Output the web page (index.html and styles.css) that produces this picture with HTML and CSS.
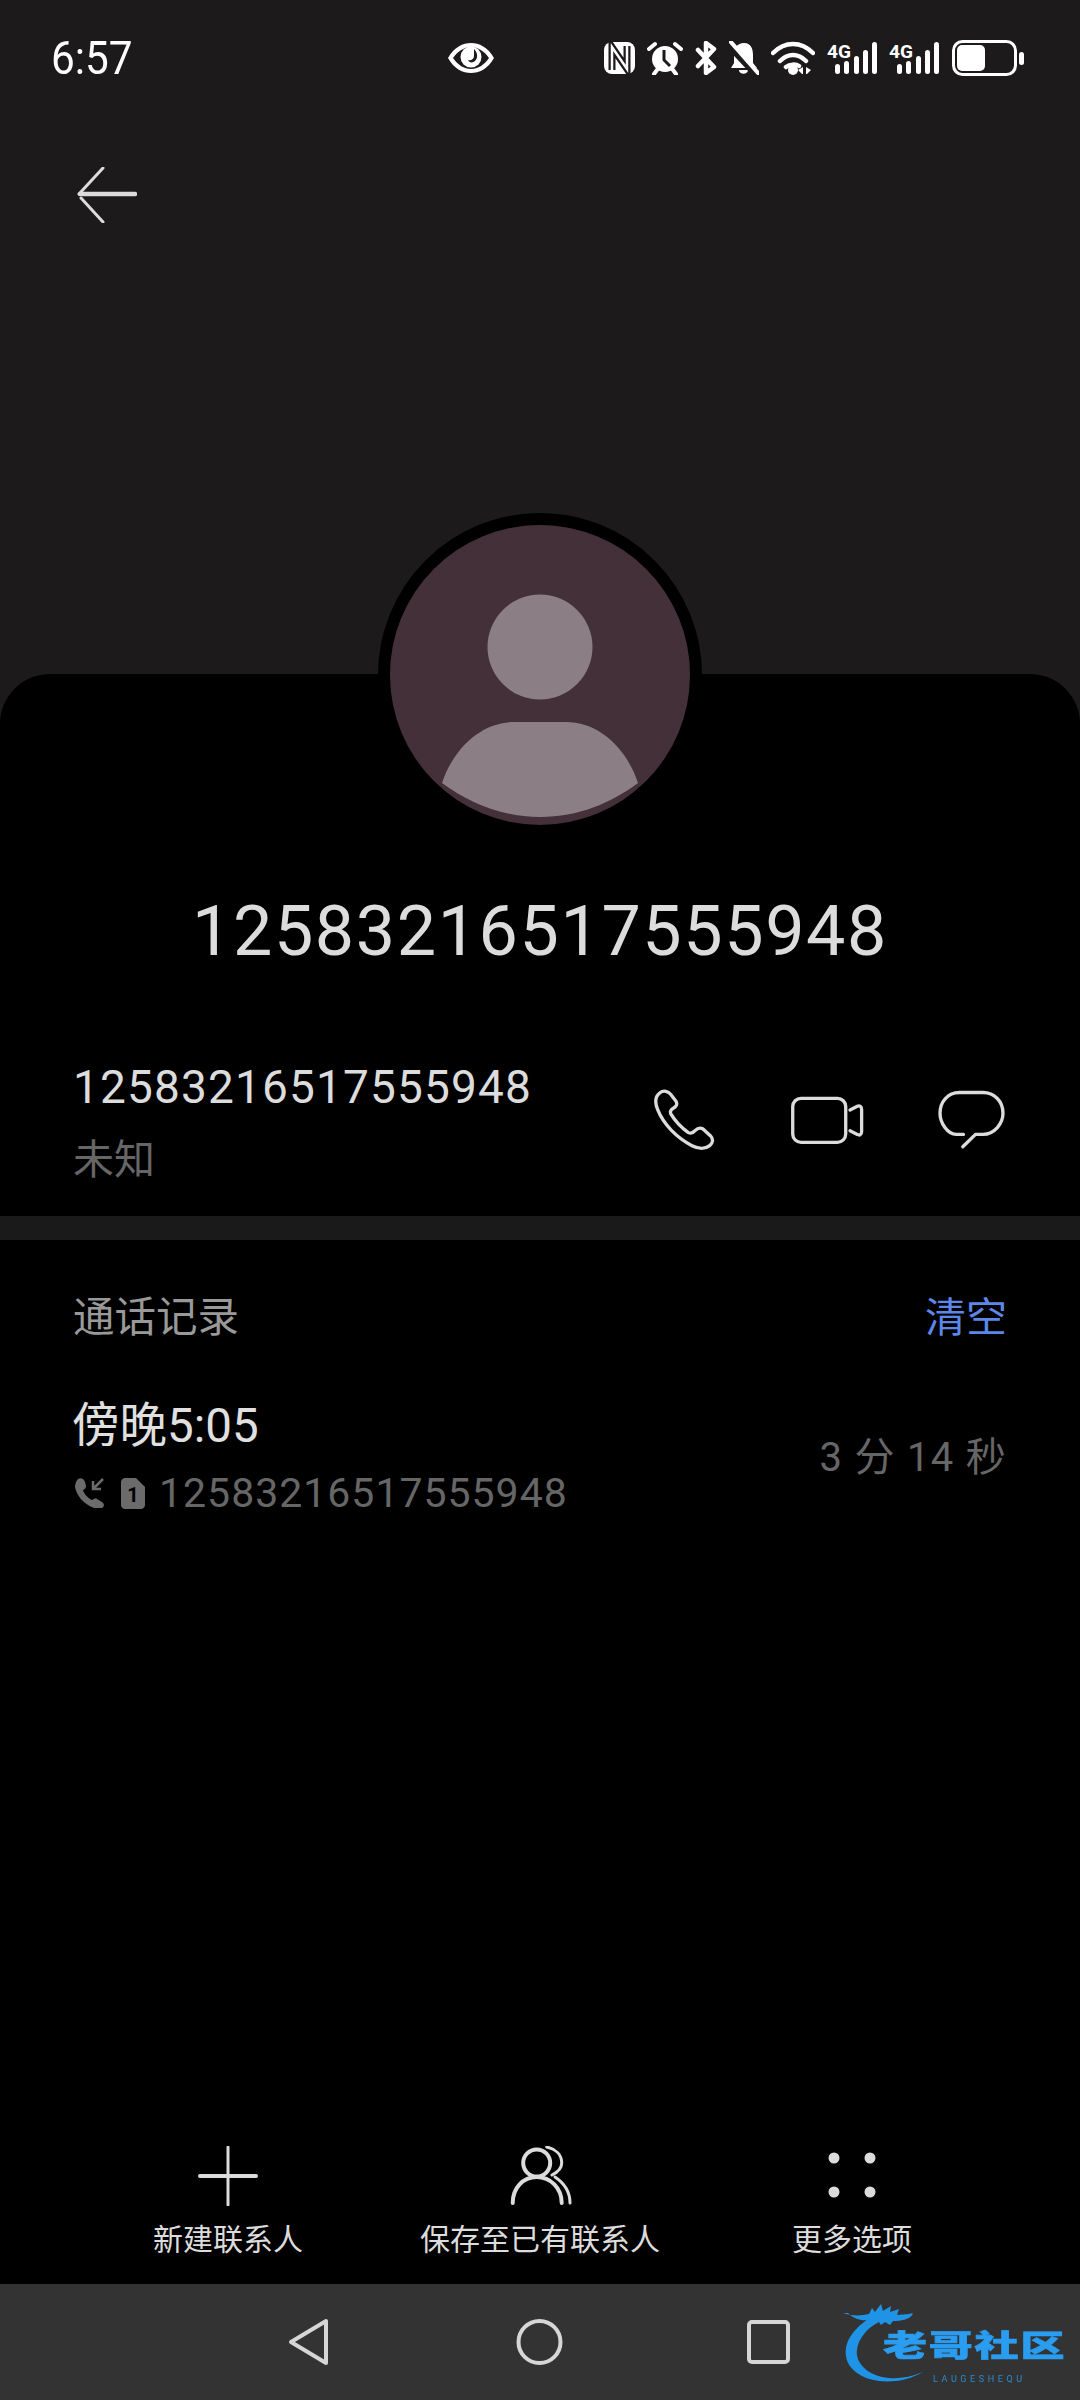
FILE: index.html
```html
<!DOCTYPE html>
<html lang="zh">
<head>
<meta charset="utf-8">
<title>通话详情</title>
<link rel="stylesheet" href="styles.css">
</head>
<body>
<div class="page">
  <header class="top">
    <div class="status">
      <span class="time">6:57</span>
      <svg class="eye" width="46" height="32" viewBox="0 0 46 32"><path class="w" fill-rule="evenodd" d="M0 16C6 5 15 1 23 1s17 4 23 15c-6 11-15 15-23 15S6 27 0 16zM23 5C16 5 10 9 5 16c5 7 11 11 18 11s13-4 18-11C36 9 30 5 23 5z"/><circle class="w" cx="23" cy="15" r="10.5"/><path class="k" d="M26 7c4 4 4 9 1 12-2 2-6 2-7-1 3 1 6-1 6-4 0-3 0-5 0-7z"/></svg>
      <div class="indicators">
        <svg width="31" height="32" viewBox="0 0 31 32"><rect class="w" width="31" height="32" rx="8"/><path class="nk" d="M8 28V5l15 22V4"/><path class="nw" d="M8 28V5l15 22V4"/></svg>
        <svg width="36" height="34" viewBox="0 0 36 34"><circle class="w" cx="18" cy="18" r="13"/><path class="hand" d="M17 9v10l6 6"/><path class="st" d="M2 8l6-5M34 8l-6-5M7 33l3-4M29 33l-3-4"/></svg>
        <svg width="22" height="34" viewBox="0 0 22 34"><path class="bt" d="M3 9l16 17-8 6V2l8 6L3 25"/></svg>
        <svg width="30" height="34" viewBox="0 0 30 34"><path class="w" d="M15 2c7 0 9 6 9 12v8l4 5H2l3-5v-8c0-7 3-12 10-12zM10 29h9c0 5-9 5-9 0z"/><path class="slashk" d="M-2 3l30 32"/><path class="st" d="M1 0l28 32"/></svg>
        <svg width="44" height="34" viewBox="0 0 44 34"><path class="wifi" d="M2 12c12-12 28-12 40 0M9 20c8-8 18-8 26 0M15 26c4-3 10-3 13-1"/><circle class="w" cx="22" cy="29" r="5"/><path class="w" d="M32 26v7h-1l-4-4zM35 26v7h1l4-4z"/></svg>
        <svg class="signal" width="50" height="34" viewBox="0 0 50 34"><text class="g4" x="0" y="17" textLength="24" lengthAdjust="spacingAndGlyphs">4G</text><rect class="w" x="8" y="23" width="5" height="10" rx="2.5"/><rect class="w" x="17" y="20" width="5" height="13" rx="2.5"/><rect class="w" x="27" y="15" width="5" height="18" rx="2.5"/><rect class="w" x="36" y="9" width="5" height="24" rx="2.5"/><rect class="w" x="45" y="1" width="5" height="32" rx="2.5"/></svg>
        <svg class="signal" width="50" height="34" viewBox="0 0 50 34"><text class="g4" x="0" y="17" textLength="24" lengthAdjust="spacingAndGlyphs">4G</text><rect class="w" x="8" y="23" width="5" height="10" rx="2.5"/><rect class="w" x="17" y="20" width="5" height="13" rx="2.5"/><rect class="w" x="27" y="15" width="5" height="18" rx="2.5"/><rect class="w" x="36" y="9" width="5" height="24" rx="2.5"/><rect class="w" x="45" y="1" width="5" height="32" rx="2.5"/></svg>
        <svg class="battery" width="72" height="36" viewBox="0 0 72 36"><rect class="batt" x="1.5" y="1.5" width="62" height="33" rx="9"/><rect class="w" x="5" y="5" width="28" height="26" rx="5"/><rect class="w" x="67" y="12" width="5" height="13" rx="2.5"/></svg>
      </div>
    </div>
    <div class="toolbar">
      <svg class="back" width="60" height="56" viewBox="0 0 60 56"><path class="backline" d="M26 1L2 27M26 55L4 31"/><path class="backbar" d="M3 27h55"/></svg>
    </div>
  </header>

  <main class="card">
    <div class="avatar">
      <svg width="300" height="300" viewBox="0 0 300 300"><circle class="av-bg" cx="150" cy="150" r="150"/><circle class="av-fg" cx="150" cy="122" r="52.5"/><path class="av-fg" d="M52 258c12-36 40-61 72-61h52c32 0 60 25 72 61-27 20-60 34-98 34s-71-14-98-34z"/></svg>
    </div>
    <h1 class="name">12583216517555948</h1>

    <section class="contact">
      <div class="contact-text">
        <div class="contact-num">12583216517555948</div>
        <div class="contact-sub">未知</div>
      </div>
      <div class="contact-actions">
        <svg class="ico" width="65" height="65" viewBox="95 85 195 195"><path d="M118 100c12-10 27-5 34 5l15 20c5 8 1 15-7 20-10 5-12 13-7 20 12 20 32 40 50 53 7 4 15 2 21-5 8-8 16-10 24-5l22 20c10 10 8 22-2 30-13 10-33 10-53 0-45-23-85-63-103-108-9-22-7-40 6-50z"/></svg>
        <svg class="ico" width="77" height="53" viewBox="510 100 230 160"><rect x="520" y="113" width="160" height="133" rx="25"/><path d="M693 148l22-11c7-3 13 0 13 10v66c0 10-6 13-13 9l-22-11"/></svg>
        <svg class="ico" width="72" height="64" viewBox="950 90 215 190"><path d="M1032 228h-22c-25 0-48-33-48-63 0-35 23-62 58-62h70c35 0 60 27 60 62 0 30-25 63-60 63h-22l-38 37"/></svg>
      </div>
    </section>

    <div class="divider"></div>

    <section class="log">
      <div class="log-head">
        <span class="log-title">通话记录</span>
        <span class="log-clear">清空</span>
      </div>
      <div class="log-row">
        <div class="log-main">
          <div class="log-time">傍晚5:05</div>
          <div class="log-sub">
            <svg width="30" height="30" viewBox="0 0 30 30"><path class="g" d="M3 1c3-2 6 0 7 3l1 4c0 2-1 3-3 4 1 4 5 8 9 10 2-1 3-2 5-1l5 3c3 2 2 5 0 6-4 2-9 0-14-3C6 23 1 15 0 9c0-3 1-6 3-8z"/><path class="gs" d="M28 1l-9 9M18 3v8h8"/></svg>
            <svg class="sim" width="24" height="31" viewBox="0 0 24 31"><path class="g" d="M4 0h11l9 9v18c0 2-2 4-4 4H4c-2 0-4-2-4-4V4c0-2 2-4 4-4z"/><text class="sim-n" x="12" y="24">1</text></svg>
            <span class="log-num">12583216517555948</span>
          </div>
        </div>
        <div class="log-dur">3 分 14 秒</div>
      </div>
    </section>

    <div class="spacer"></div>

    <section class="actions">
      <div class="action">
        <svg width="60" height="60" viewBox="0 0 60 60"><path class="thin" d="M30 1v58"/><path class="thick" d="M2 30h56"/></svg>
        <span class="action-label">新建联系人</span>
      </div>
      <div class="action">
        <svg width="64" height="60" viewBox="0 0 64 60"><circle class="pers" cx="28.7" cy="17" r="13.5"/><path class="pers" d="M4.7 57C4.7 42 15 31 28.7 31S53.7 42 53.7 57"/><path class="pers2" d="M38.7 1C48 3 53.7 9 53.7 17 53.7 22 50 26 44 29M47 31C56 37 62 46 62 57"/></svg>
        <span class="action-label">保存至已有联系人</span>
      </div>
      <div class="action">
        <svg width="60" height="60" viewBox="0 0 60 60"><circle class="dot" cx="12" cy="12" r="5.5"/><circle class="dot" cx="48" cy="12" r="5.5"/><circle class="dot" cx="12" cy="46" r="5.5"/><circle class="dot" cx="48" cy="46" r="5.5"/></svg>
        <span class="action-label">更多选项</span>
      </div>
    </section>
  </main>

  <nav class="nav">
    <svg width="60" height="60" viewBox="0 0 60 60"><path class="navi" d="M46 9v42L11 30z"/></svg>
    <svg width="60" height="60" viewBox="0 0 60 60"><circle class="navi" cx="29.5" cy="30" r="21"/></svg>
    <svg width="60" height="60" viewBox="0 0 60 60"><rect class="navi" x="9" y="10" width="39" height="40" rx="3"/></svg>
    <div class="mark">
      <svg class="mark-art" width="100" height="84" viewBox="0 0 100 84"><path class="mark-fill" d="M30 12C10 24 1 38 3 52c2 16 22 28 50 25 10-1 20-5 27-9-12 5-24 7-34 6C24 72 12 58 14 46c1-11 10-22 22-28z"/><path class="mark-fill" d="M0 9c8 3 18 3 26 1l3-6 3 4 6-8 2 7 8-5-1 6 9-3-2 6 12-1c2-1 3-1 4 0-4 6-12 7-20 7l-3 4-5-3-4 3-3-4-7 3-2-4c-8 1-15-1-21-7z"/></svg>
      <div class="mark-title">老哥社区</div>
      <div class="mark-sub">LAUGESHEQU</div>
    </div>
  </nav>
</div>
</body>
</html>
```

FILE: styles.css
```css
* { box-sizing: border-box; }
html, body { margin: 0; padding: 0; background: #1c1a1b; }
body { font-family: Roboto, "Noto Sans CJK SC", sans-serif; }
svg { display: block; flex: none; }

.page { width: 1080px; height: 2400px; display: flex; flex-direction: column; overflow: hidden; background: #1c1a1b; }

.top { height: 674px; flex: none; }
.status { height: 116px; display: flex; align-items: center; padding: 0 56px 0 51px; }
.time { width: 397px; color: #fff; font-size: 46px; line-height: 1; transform: scaleX(0.92); transform-origin: left center; }
.indicators { margin-left: auto; display: flex; align-items: center; gap: 12px; }
.battery { margin-left: 1px; }
.signal { overflow: visible; }
.w { fill: #fff; }
.k { fill: #1c1a1b; }
.nk { fill: none; stroke: #1c1a1b; stroke-width: 7; }
.nw { fill: none; stroke: #fff; stroke-width: 2.5; }
.hand { fill: none; stroke: #1c1a1b; stroke-width: 3; }
.st { fill: none; stroke: #fff; stroke-width: 4; stroke-linecap: round; stroke-linejoin: round; }
.bt { fill: none; stroke: #fff; stroke-width: 4.5; stroke-linecap: round; stroke-linejoin: round; }
.slashk { fill: none; stroke: #1c1a1b; stroke-width: 6; }
.wifi { fill: none; stroke: #fff; stroke-width: 4.5; stroke-linecap: round; }
.g4 { fill: #fff; font-family: Roboto, sans-serif; font-size: 19px; font-weight: 700; }
.batt { fill: none; stroke: #fff; stroke-width: 3; }

.toolbar { height: 158px; display: flex; align-items: center; padding-left: 77px; }
.backline { fill: none; stroke: #dcdcdc; stroke-width: 3; stroke-linecap: round; }
.backbar { fill: none; stroke: #dcdcdc; stroke-width: 4.5; stroke-linecap: round; }

.card { flex: 1; background: #000; border-radius: 50px 50px 0 0; display: flex; flex-direction: column; min-height: 0; }
.avatar { width: 324px; height: 324px; margin: -161px auto 0; border: 12px solid #000; border-radius: 50%; position: relative; flex: none; }
.av-bg { fill: #443038; }
.av-fg { fill: #8b7f85; }
.name { margin: 49px 0 0; text-align: center; color: #dcdcdc; font-size: 70px; font-weight: 400; line-height: 90px; letter-spacing: 1.6px; }

.contact { display: flex; align-items: center; justify-content: space-between; margin-top: 81px; padding: 0 72px 26px 73px; }
.contact-text { display: flex; flex-direction: column; gap: 13px; }
.contact-num { color: #dcdcdc; font-size: 46px; line-height: 60px; letter-spacing: 1.15px; }
.contact-sub { color: #666; font-size: 41px; line-height: 60px; }
.contact-actions { display: flex; align-items: center; gap: 71px; margin-top: -7px; }
.ico { fill: none; stroke: #dcdcdc; stroke-width: 10; stroke-linecap: round; stroke-linejoin: round; }
.ico + .ico { margin-left: 1px; }
.ico + .ico + .ico { margin-left: -1px; }

.divider { height: 24px; flex: none; background: #1a1a1a; }

.log { padding: 48px 73px 0; }
.log-head { display: flex; justify-content: space-between; line-height: 60px; }
.log-title { color: #999; font-size: 41.5px; }
.log-clear { color: #5d87e8; font-size: 41px; }
.log-row { display: flex; align-items: center; justify-content: space-between; margin-top: 48px; }
.log-main { display: flex; flex-direction: column; gap: 7px; }
.log-time { color: #e0e0e0; font-size: 47.5px; line-height: 60px; margin-left: -1px; }
.log-sub { display: flex; align-items: center; gap: 16px; height: 60px; margin-left: 2px; }
.sim { margin-right: -2px; }
.g { fill: #6b6b6b; }
.gs { fill: none; stroke: #6b6b6b; stroke-width: 2.5; }
.sim-n { fill: #000; font-size: 20px; font-weight: 700; text-anchor: middle; }
.log-num { color: #666; font-size: 41px; letter-spacing: 1px; }
.log-dur { color: #666; font-size: 40px; letter-spacing: 1.3px; margin-top: -12px; }

.spacer { flex: 1; }

.actions { display: grid; grid-template-columns: repeat(3, 312px); padding: 0 72px 24px; }
.action { display: flex; flex-direction: column; align-items: center; gap: 14px; }
.action-label { color: #dcdcdc; font-size: 30px; line-height: 40px; white-space: nowrap; }
.thin { fill: none; stroke: #dcdcdc; stroke-width: 3; stroke-linecap: round; }
.thick { fill: none; stroke: #dcdcdc; stroke-width: 4; stroke-linecap: round; }
.pers { fill: none; stroke: #dcdcdc; stroke-width: 4; stroke-linecap: round; }
.pers2 { fill: none; stroke: #dcdcdc; stroke-width: 3; stroke-linecap: round; }
.dot { fill: #dcdcdc; }

.nav { height: 116px; flex: none; background: #333; display: flex; align-items: center; justify-content: center; gap: 170px; position: relative; }
.navi { fill: none; stroke: #d6d6d6; stroke-width: 4; stroke-linejoin: round; }
.mark { position: absolute; left: 843px; top: 20px; width: 225px; height: 84px; filter: blur(0.7px); }
.mark-art { position: absolute; left: 0; top: 0; }
.mark-fill { fill: #1f93e6; }
.mark-title { position: absolute; left: 40px; top: 19px; color: #2a9df0; font-size: 44px; font-weight: 900; line-height: 46px; letter-spacing: 1.8px; white-space: nowrap; -webkit-text-stroke: 1px #2a9df0; transform: scaleY(0.68); transform-origin: left center; }
.mark-sub { position: absolute; left: 90px; top: 70px; color: #2a8ccf; font-size: 9px; line-height: 10px; letter-spacing: 3.6px; white-space: nowrap; }
```
